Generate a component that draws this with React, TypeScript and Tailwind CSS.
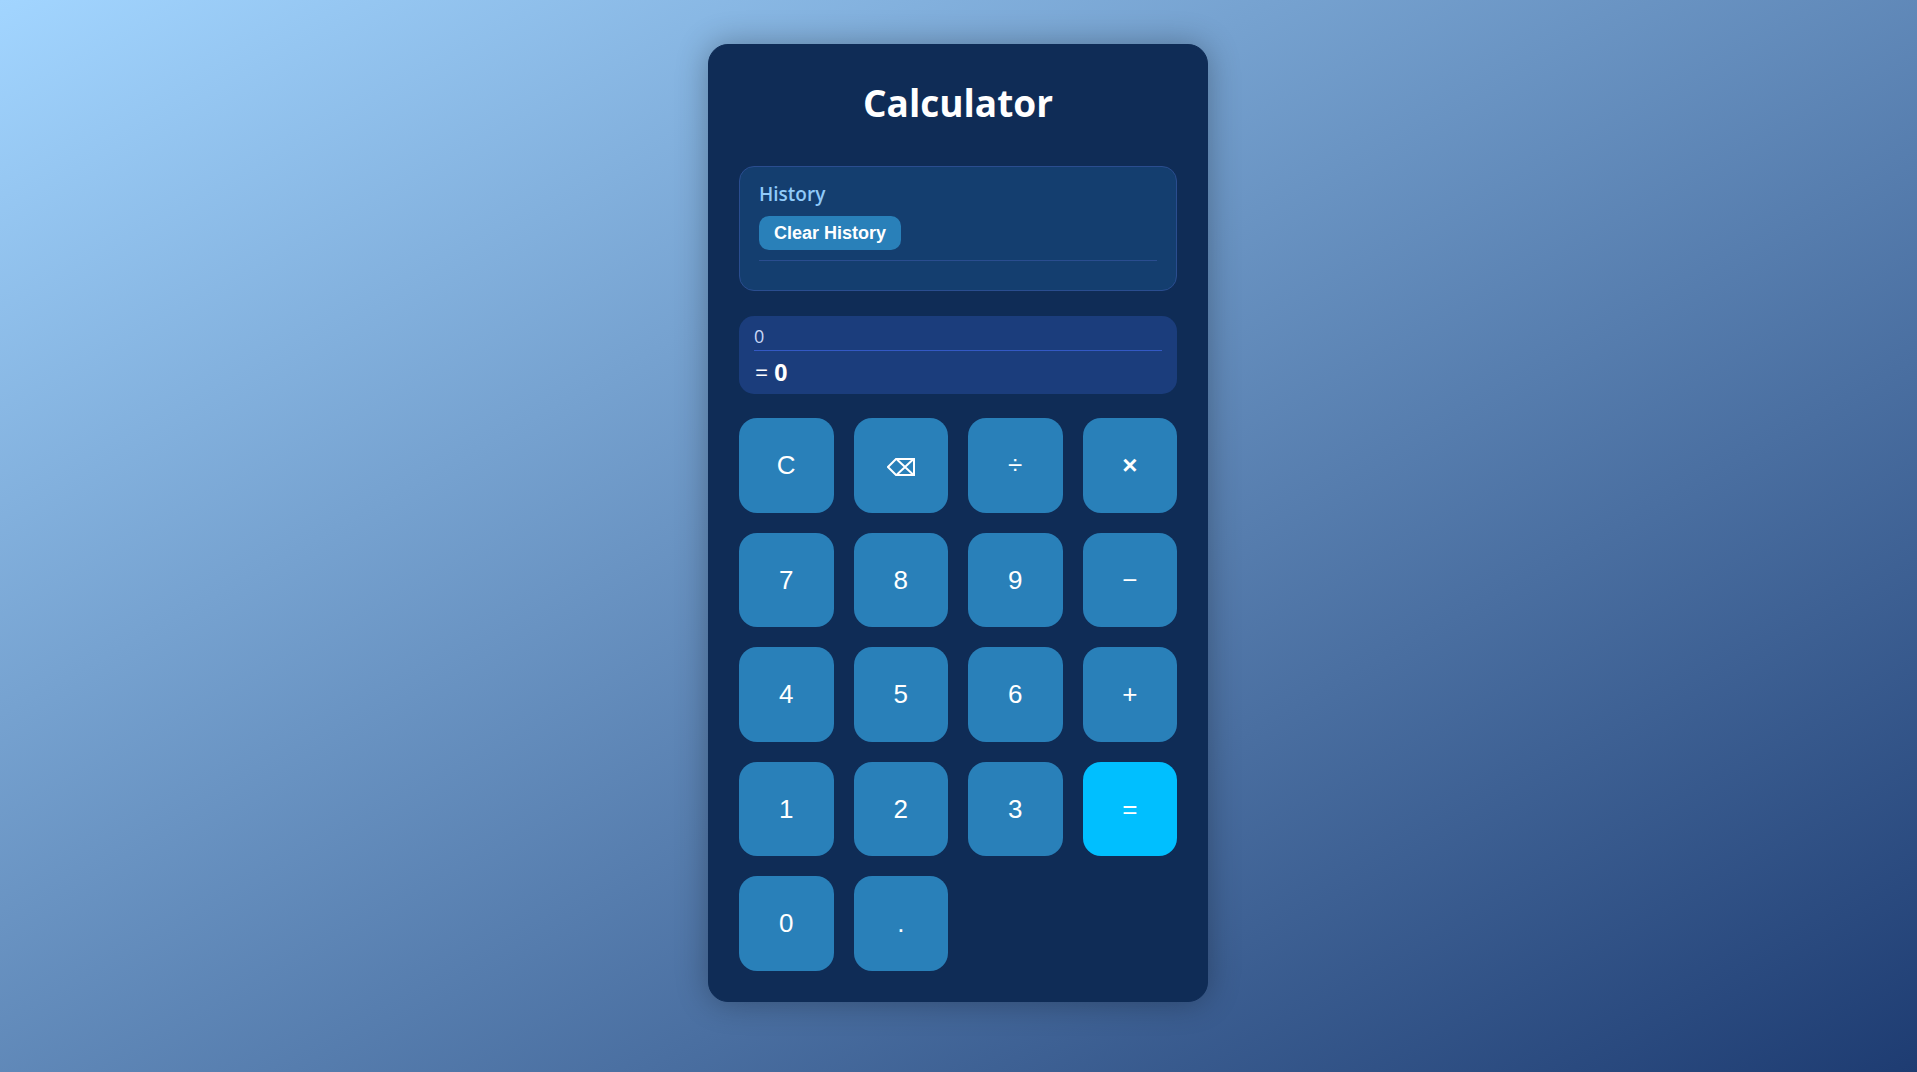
const keys = [
  { label: 'C', name: 'Clear' },
  { label: '⌫', name: 'Backspace' },
  { label: '÷', name: 'Divide' },
  { label: '×', name: 'Multiply' },
  { label: '7' }, { label: '8' }, { label: '9' },
  { label: '−', name: 'Subtract' },
  { label: '4' }, { label: '5' }, { label: '6' },
  { label: '+', name: 'Add' },
  { label: '1' }, { label: '2' }, { label: '3' },
  { label: '=', name: 'Equals' },
  { label: '0' },
  { label: '.', name: 'Decimal point' },
];

function KeyFace({ label }: { label: string }) {
  if (label === '⌫') {
    return (
      <svg className="mt-1 h-5 w-7" viewBox="0 0 28 20" fill="none" stroke="currentColor" strokeWidth="2" aria-hidden="true">
        <path d="M9 2H27V18H9L1 10Z" />
        <path d="M10 2.5L26 17.5M26 2.5L10 17.5" />
      </svg>
    );
  }
  return label === '×' ? <strong>{label}</strong> : <>{label}</>;
}

export default function App() {
  return (
    <main className="flex min-h-screen items-start justify-center bg-[linear-gradient(to_bottom_right,#a2d5ff,#1e3c72)] pt-11 pr-5 pb-11 pl-[19px] font-['Open_Sans',sans-serif] text-white">
      <section className="w-full max-w-[500px] rounded-[20px] border border-[#0f2c56] bg-[#0f2c56] p-[30px] shadow-[0_0_32px_rgba(0,0,0,0.3)]">
        <h1 className="mb-[35px] text-center text-[37px] leading-[56px] font-bold">Calculator</h1>
        <section className="mb-[25px] h-[125px] rounded-[15px] border border-[#2a4d8f] bg-[#143e6f] px-[19px] pt-[14px]">
          <h2 className="mb-2 text-[19px] leading-[27px] font-semibold text-[#90caf9]">History</h2>
          <button className="block h-[34px] rounded-[10px] bg-[#2980b9] px-[15px] font-['Liberation_Sans',sans-serif] text-lg leading-none font-bold">
            Clear History
          </button>
          <hr className="mt-[10px] border-[#2a4d8f]" />
        </section>
        <output className="mb-6 block h-[78px] rounded-[15px] bg-[#1b3d7c] px-[15px] pt-2">
          <div className="h-[27px] border-b border-[#3459c4] text-lg leading-6 text-[#c9d8f8]">0</div>
          <div className="mt-[7px] pl-px text-[23px] leading-7">
            = <strong>0</strong>
          </div>
        </output>
        <div className="grid grid-cols-4 gap-5">
          {keys.map(({ label, name }) => (
            <button
              key={label}
              aria-label={name}
              className={`flex aspect-square items-center justify-center rounded-[18px] font-['Liberation_Sans',sans-serif] text-[26px] leading-none ${
                label === '=' ? 'bg-[#00bfff]' : 'bg-[#2980b9]'
              }`}
            >
              <KeyFace label={label} />
            </button>
          ))}
        </div>
      </section>
    </main>
  );
}
